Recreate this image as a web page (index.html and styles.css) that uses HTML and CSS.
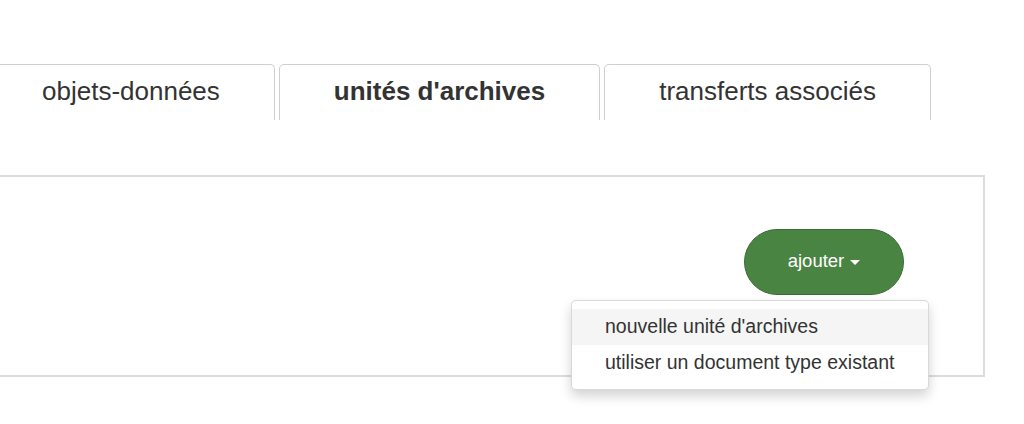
FILE: index.html
```html
<!DOCTYPE html>
<html lang="fr">
<head>
<meta charset="utf-8">
<title>unités d'archives</title>
<link rel="stylesheet" href="styles.css">
</head>
<body>
<div class="page">
  <ul class="tabs">
    <li class="tab">objets-données</li>
    <li class="tab active">unités d'archives</li>
    <li class="tab">transferts associés</li>
  </ul>
  <div class="panel">
    <div class="btn-group">
      <button class="btn-add" type="button">ajouter <span class="caret"></span></button>
      <ul class="dropdown">
        <li class="item hover">nouvelle unité d'archives</li>
        <li class="item">utiliser un document type existant</li>
      </ul>
    </div>
  </div>
</div>
</body>
</html>
```

FILE: styles.css
```css
html, body {
  margin: 0;
  padding: 0;
  background: #fff;
  overflow: hidden;
}
body {
  font-family: "Liberation Sans", Arial, Helvetica, sans-serif;
  color: #333;
}
.page {
  width: 1024px;
  height: 424px;
  overflow: hidden;
}
.tabs {
  list-style: none;
  margin: 64px 0 0 -13px;
  padding: 0;
  display: flex;
  gap: 4px;
}
.tab {
  border: 1px solid #cfcfcf;
  border-bottom: none;
  border-radius: 5px 5px 0 0;
  padding: 8px 54px 11px;
  font-size: 26px;
  line-height: 36px;
  color: #333;
  white-space: nowrap;
}
.tab.active {
  font-weight: bold;
}
.panel {
  margin: 55px 39px 0 -10px;
  border: 2px solid #dcdcdc;
  padding: 52px 79px 80px 0;
  display: flex;
  justify-content: flex-end;
}
.btn-group {
  position: relative;
}
.btn-add {
  display: flex;
  align-items: center;
  justify-content: center;
  gap: 6px;
  width: 160px;
  height: 66px;
  margin: 0;
  padding: 0 0 2px;
  border: 1px solid #3c6b35;
  border-radius: 33px;
  background: #4a8442;
  color: #fff;
  font-family: "Liberation Sans", Arial, Helvetica, sans-serif;
  font-size: 18.5px;
}
.caret {
  display: inline-block;
  width: 0;
  height: 0;
  border-top: 5px solid #fff;
  border-left: 5px solid transparent;
  border-right: 5px solid transparent;
  margin-top: 2px;
}
.dropdown {
  position: absolute;
  top: 71px;
  right: -25px;
  width: 356px;
  margin: 0;
  padding: 8px 0;
  list-style: none;
  background: #fff;
  border: 1px solid rgba(0, 0, 0, 0.15);
  border-radius: 5px;
  box-shadow: 0 6px 12px rgba(0, 0, 0, 0.175);
}
.item {
  padding: 0 33px;
  height: 36px;
  line-height: 35px;
  font-size: 19.5px;
  color: #333;
  white-space: nowrap;
}
.item.hover {
  background: #f5f5f5;
}
```
